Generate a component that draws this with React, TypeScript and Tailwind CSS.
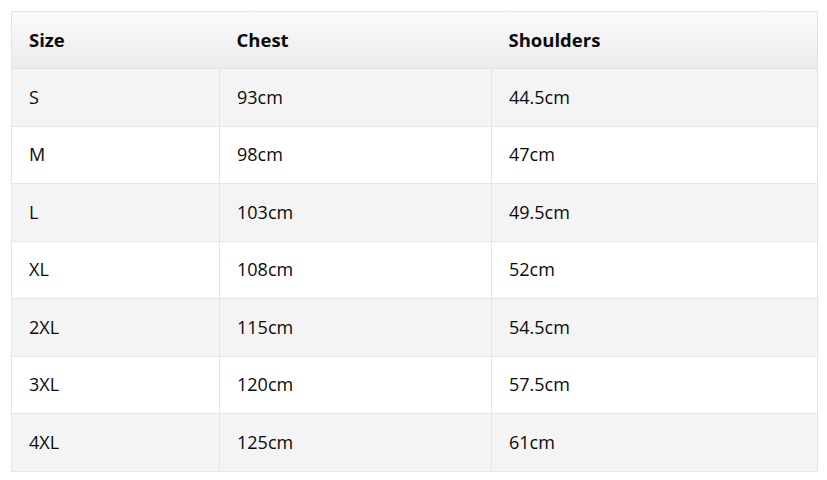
const rows = [
  ['S', '93cm', '44.5cm'],
  ['M', '98cm', '47cm'],
  ['L', '103cm', '49.5cm'],
  ['XL', '108cm', '52cm'],
  ['2XL', '115cm', '54.5cm'],
  ['3XL', '120cm', '57.5cm'],
  ['4XL', '125cm', '61cm'],
];

export default function App() {
  return (
    <div className="bg-white w-[827px] h-[480px] p-[11px] font-['Open_Sans',sans-serif] text-[18px] text-[#0a0a0a]">
      <table className="w-[806px] border-collapse table-fixed">
        <colgroup>
          <col className="w-[208px]" />
          <col className="w-[272px]" />
          <col className="w-[326px]" />
        </colgroup>
        <thead>
          <tr className="h-[57px] bg-gradient-to-b from-[#fbfbfb] to-[#ebebeb]">
            {['Size', 'Chest', 'Shoulders'].map((h) => (
              <th key={h} className="border-y border-[#e2e2e2] first:border-l last:border-r px-[17px] text-left font-bold text-[18.5px]">
                {h}
              </th>
            ))}
          </tr>
        </thead>
        <tbody>
          {rows.map((r, i) => (
            <tr key={r[0]} className={`h-[57.5px] ${i % 2 === 0 ? 'bg-[#f4f4f4]' : 'bg-white'}`}>
              {r.map((c, j) => (
                <td key={j} className="border border-[#e6e6e6] px-[17px]">
                  {c}
                </td>
              ))}
            </tr>
          ))}
        </tbody>
      </table>
    </div>
  );
}
